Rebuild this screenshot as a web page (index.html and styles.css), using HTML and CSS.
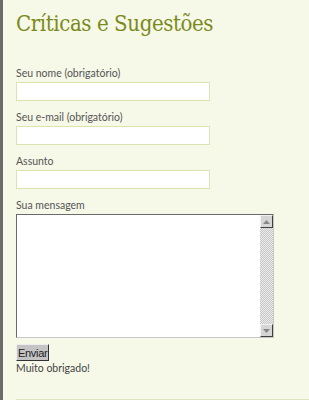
FILE: index.html
```html
<!DOCTYPE html>
<html lang="pt">
<head>
    <meta charset="UTF-8">
    <title>Críticas e Sugestões</title>
    <link rel="stylesheet" href="styles.css">
</head>
<body>
    <div class="page">
        <h2 class="title">Críticas e Sugestões</h2>

        <form class="contact-form">
            <label class="field">
                <span>Seu nome (obrigatório)</span>
                <input type="text" class="text-input">
            </label>
            <label class="field">
                <span>Seu e-mail (obrigatório)</span>
                <input type="text" class="text-input">
            </label>
            <label class="field">
                <span>Assunto</span>
                <input type="text" class="text-input">
            </label>
            <label class="field">
                <span>Sua mensagem</span>
                <div class="message-box">
                    <textarea class="message"></textarea>
                    <!-- fake classic scrollbar -->
                    <div class="scrollbar">
                        <div class="scroll-btn">
                            <svg width="7" height="4" viewBox="0 0 7 4"><path d="M0 4h7L3.5 0z" fill="#888"/></svg>
                        </div>
                        <div class="scroll-track"></div>
                        <div class="scroll-btn">
                            <svg width="7" height="4" viewBox="0 0 7 4"><path d="M0 0h7L3.5 4z" fill="#888"/></svg>
                        </div>
                    </div>
                </div>
            </label>
            <button type="button" class="send-btn">Enviar</button>
            <p class="thanks">Muito obrigado!</p>
        </form>

        <div class="footer-line"></div>
    </div>
</body>
</html>
```

FILE: styles.css
```css
/* Page */
body {
    margin: 0;
    background: #f6f8e8;
    font-family: Lato, "Open Sans", Arial, sans-serif;
    color: #555;
    height: 400px;
    overflow: hidden;
}

.page {
    border-left: 3px solid #6b6b6b;
    min-height: 400px;
    padding: 11px 0 0 13px;
    box-sizing: border-box;
}

/* Title */
.title {
    font-family: "DejaVu Serif Condensed", "DejaVu Serif", Georgia, serif;
    font-stretch: condensed;
    font-weight: normal;
    font-size: 22px;
    letter-spacing: -0.4px;
    color: #7b8a1c;
    margin: 0 0 29px;
    line-height: 26px;
}

/* Form */
.contact-form {
    display: flex;
    flex-direction: column;
    align-items: flex-start;
}

.field {
    display: flex;
    flex-direction: column;
    font-size: 10.5px;
    line-height: 14px;
    margin-bottom: 9px;
}

.field span {
    margin-bottom: 2px;
}

.text-input {
    width: 194px;
    height: 19px;
    box-sizing: border-box;
    border: 1px solid #dbe3b0;
    background: #fff;
    margin: 0;
    padding: 0 2px;
}

.message-box {
    display: flex;
    width: 258px;
    height: 124px;
    box-sizing: border-box;
    border: 1px solid #c8c8c8;
    border-top-color: #6a6a6a;
    border-left-color: #6a6a6a;
    background: #fff;
}

.message {
    flex: 1;
    border: none;
    margin: 0;
    padding: 2px;
    resize: none;
    outline: none;
    background: transparent;
}

/* Scrollbar */
.scrollbar {
    width: 13px;
    display: flex;
    flex-direction: column;
}

.scroll-track {
    flex: 1;
    background-image: repeating-conic-gradient(#c6c6c6 0 25%, #ececec 0 50%);
    background-size: 2px 2px;
}

.scroll-btn {
    height: 13px;
    box-sizing: border-box;
    display: flex;
    align-items: center;
    justify-content: center;
    background: #d6d6d6;
    border: 1px solid #f2f2f2;
    border-right-color: #404040;
    border-bottom-color: #404040;
}

/* Button */
.send-btn {
    font-family: "Liberation Sans", Arial, sans-serif;
    font-size: 11px;
    letter-spacing: -0.3px;
    color: #222;
    background: #c4c4c4;
    border: 1px solid #eee;
    border-right-color: #333;
    border-bottom-color: #333;
    padding: 0 1px;
    height: 17px;
    margin-top: -3px;
}

.thanks {
    font-size: 10.5px;
    color: #444;
    margin: 0;
    line-height: 14px;
}

/* Bottom separator */
.footer-line {
    margin-top: 24px;
    border-top: 1px solid #dce3c0;
}
```
